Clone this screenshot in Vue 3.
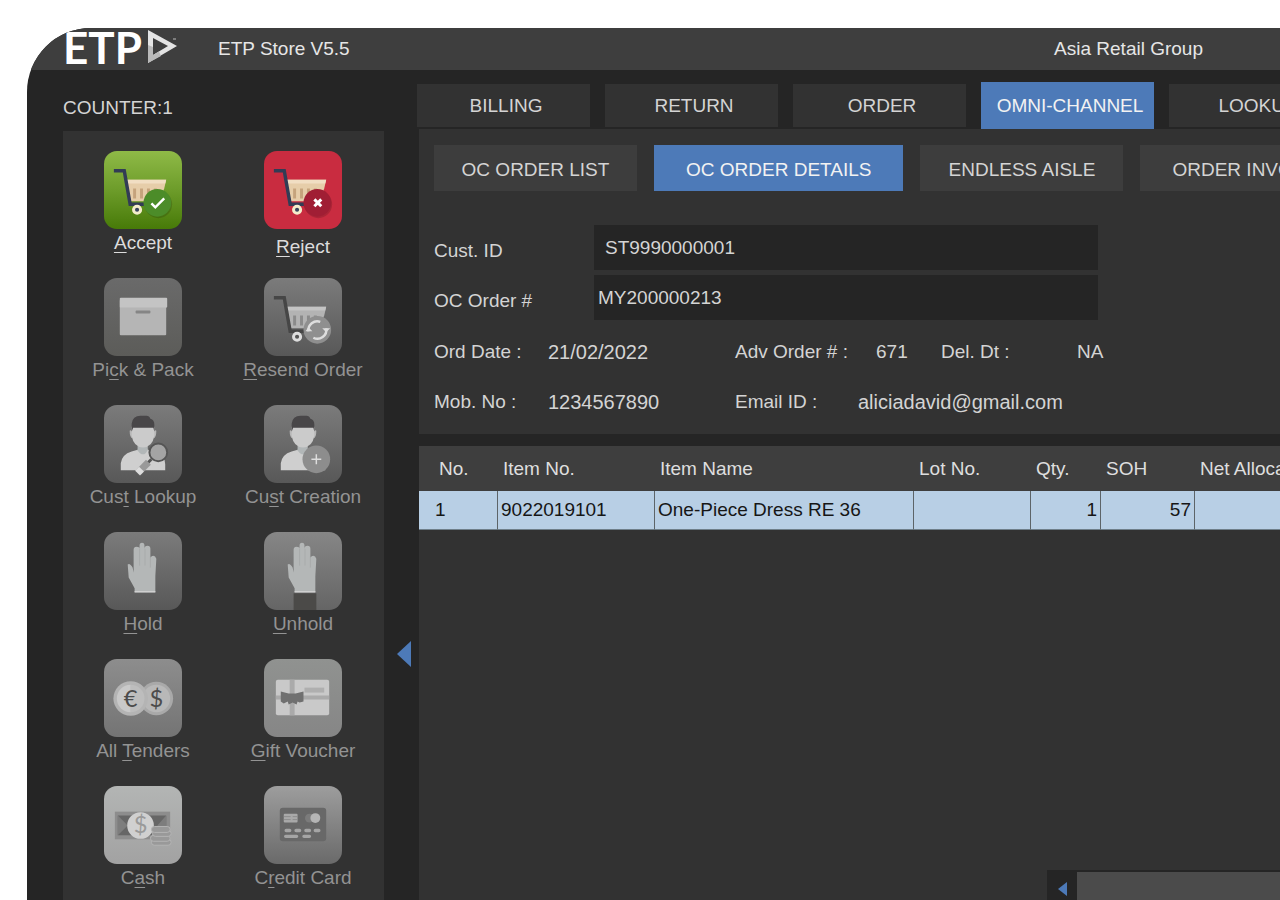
<template>
  <div class="shell">
    <header class="topbar">
      <div class="logo">
        <span class="logo-text">ETP</span>
        <svg class="logo-mark" width="30" height="34" viewBox="0 0 30 34">
          <path d="M0 0L29 16L0 33Z M5 8V25L20 16Z" fill="#e4e4e4" fill-rule="evenodd" />
          <path d="M0 15L5 17V25L11 21.500L13 26L0 33Z" fill="#b9b9b9" />
          <path d="M25 9h3" stroke="#bbb" />
        </svg>
      </div>
      <span class="app-name">ETP Store V5.5</span>
      <span class="company">Asia Retail Group</span>
    </header>

    <div class="workspace">
      <aside class="sidebar">
        <div class="counter">COUNTER:1</div>
        <div class="actions">
          <button
            v-for="action in actions"
            :key="action.id"
            type="button"
            class="action"
            :class="['action-' + action.id, { disabled: !action.enabled }]"
            :disabled="!action.enabled"
          >
            <svg class="tile" viewBox="0 0 79 79" aria-hidden="true">
              <!-- Cart icons -->
              <g v-if="action.icon === 'cart'">
                <path class="cart-basket" d="M23 29H63L61 38L56 51H27Z" />
                <path class="cart-rim" d="M23 29H63L62 33H24Z" />
                <path class="cart-slots" d="M31 38V48M38 38V48M45 38V48M52 38V48" />
                <path class="cart-handle" d="M10 20H20.500L26.500 54H44" />
                <circle class="cart-wheel" cx="33.500" cy="59.500" r="3.600" />
                <circle class="badge-shadow" cx="55" cy="54" r="14" />
                <circle class="badge" cx="54" cy="52.500" r="14" />
                <path v-if="action.id === 'accept'" class="badge-mark" d="M48 53L52 57L61 48" />
                <path v-if="action.id === 'reject'" class="badge-mark thick" d="M51 49L58 56M58 49L51 56" />
                <g v-if="action.id === 'resend'">
                  <path class="badge-mark" d="M45 54A9 9 0 0 1 57 44.500M63 51A9 9 0 0 1 50 60.500" />
                  <path d="M42 54L45 50L49 54ZM59 51L63 55L67 51Z" fill="#ddd" />
                </g>
              </g>

              <!-- Box -->
              <g v-if="action.icon === 'box'">
                <rect x="16" y="22" width="47" height="36" rx="1" fill="#b5b5b5" />
                <rect x="16" y="20" width="48" height="10" rx="1" fill="#c4c4c4" />
                <rect x="32" y="33" width="15" height="3" rx="1" fill="#858585" />
              </g>

              <!-- Customers -->
              <g v-if="action.icon === 'person'">
                <path d="M17 66V59Q18 50 28 47L35 45V40H44V45L53 48Q62 51 62 60V66Z" fill="#cfcfcf" />
                <path d="M34 40H44V46Q40 54 34 46Z" fill="#b2b7b8" />
                <path d="M26 26Q27 25 29 27V34Q26 33 26 26ZM53 26Q52 25 50 27V34Q53 33 53 26Z" fill="#b8b8b8" />
                <path d="M28 22H51V31Q49 43 39.500 43Q30 43 28 31Z" fill="#cbcbcb" />
                <path d="M28 27V19Q29 11 37 11H43Q46 11 47 14Q51 15 51 20V27L50 23H29.500Z" fill="#484648" />
                <g v-if="action.id === 'lookup'">
                  <path d="M48 55L44 59" stroke="#555" stroke-width="3" />
                  <path d="M45 58L35 68" stroke="#999" stroke-width="7" />
                  <path d="M38 65L34 69" stroke="#ddd" stroke-width="7" />
                  <circle cx="55" cy="48" r="9" fill="#a4a4a4" stroke="#555" stroke-width="2" />
                </g>
                <g v-else>
                  <circle cx="53" cy="55" r="14" fill="#8d8d8d" />
                  <path d="M53 50V60M48 55H58" stroke="#ddd" stroke-width="1.500" />
                </g>
              </g>

              <!-- Hands -->
              <g v-if="action.icon === 'hand'">
                <path v-if="action.id === 'unhold'" d="M30 62H53V79H30Z" fill="#4b4a48" />
                <path
                  d="M30 18Q30 15 33 15T36 17V14Q36 11 38.500 11T41 14V17Q41 14 44 14T47 17V26Q48 24 50 24T53 27L52 45V61H31V57L25 46L24 33Q26 31 29 36L30 41Z"
                  fill="#b4b7b7"
                />
                <path d="M36 17V34M41.500 17V34M47 25V36" stroke="#a3a6a6" stroke-width=".7" />
                <path d="M31 60.500H52" stroke="#d0d0d0" stroke-width="1.500" />
              </g>

              <!-- Tenders -->
              <g v-if="action.icon === 'coins'">
                <circle cx="53" cy="40" r="17" fill="#a9a9a9" />
                <circle cx="53" cy="40" r="14" fill="#b8b8b8" />
                <circle cx="27" cy="40" r="17.500" fill="#b4b4b4" />
                <path d="M27 26A14 14 0 0 0 27 54Z" fill="#c9c9c9" />
                <path d="M27 26A14 14 0 0 1 27 54Z" fill="#bdbdbd" />
                <text class="coin-sign" x="27" y="49">€</text>
                <text class="coin-sign" x="53" y="49">$</text>
              </g>

              <!-- Gift voucher -->
              <g v-if="action.icon === 'gift'">
                <rect x="12" y="21" width="54" height="36" rx="2" fill="#c9c9c9" />
                <path d="M26 21H31V57H26ZM12 37H66V41H12Z" fill="#aaa" />
                <path d="M17 33L25 35H32L40 33V43L36 44L34 43L33 46L29 44L25 46L24 43L20 45L17 43Z" fill="#707070" />
                <rect x="41" y="29" width="20" height="5" fill="#afafaf" />
              </g>

              <!-- Cash -->
              <g v-if="action.icon === 'cash'">
                <rect x="11" y="26" width="56" height="28" fill="#8d8d8d" />
                <path d="M14 30H63V50H14Z" fill="#666" />
                <path d="M14 30L24 40L14 50ZM63 30L54 40L63 50Z" fill="#7d7d7d" />
                <circle cx="37" cy="40" r="13.500" fill="#d0d0d0" />
                <text class="cash-sign" x="37" y="48">$</text>
                <g fill="#999" stroke="#b4b4b4">
                  <rect x="48" y="54" width="20" height="6" rx="3" />
                  <rect x="47" y="50" width="20" height="6" rx="3" />
                  <rect x="49" y="45" width="19" height="6" rx="3" />
                  <rect x="48" y="41" width="19" height="6" rx="3" />
                </g>
              </g>

              <!-- Credit card -->
              <g v-if="action.icon === 'card'">
                <rect x="16" y="22" width="47" height="34" rx="3" fill="#686868" />
                <rect x="20" y="28" width="14" height="9" rx="1" fill="#a9a9a9" />
                <path d="M20 31H27M20 34H27M29 31H34M29 34H34" stroke="#888" stroke-width=".8" />
                <circle cx="46" cy="32.500" r="4.500" fill="#7b7b7b" />
                <circle cx="52" cy="32.500" r="5" fill="#b5b5b5" />
                <path
                  d="M22.500 45H26M32.500 45H36M42.500 45H46M52 45H55.500M22 51H33M40.500 51H46"
                  stroke="#a5a5a5"
                  stroke-width="3.500"
                  stroke-linecap="round"
                />
              </g>
            </svg>
            <span class="action-label">{{ action.before }}<u>{{ action.key }}</u>{{ action.after }}</span>
          </button>
        </div>
      </aside>

      <div class="collapse">
        <button type="button" class="collapse-button" aria-label="Collapse">
          <svg width="14" height="26" viewBox="0 0 14 26"><path d="M14 0V26L0 13Z" fill="#4d7ab8" /></svg>
        </button>
      </div>

      <main class="content">
        <nav class="tabs">
          <button
            v-for="tab in tabs"
            :key="tab"
            type="button"
            class="tab"
            :class="{ active: tab === activeTab }"
            @click="activeTab = tab"
          >
            {{ tab }}
          </button>
        </nav>

        <section class="order-panel">
          <nav class="subtabs">
            <button
              v-for="tab in subTabs"
              :key="tab.label"
              type="button"
              class="subtab"
              :class="{ wide: tab.wide, active: tab.label === activeSubTab }"
              @click="activeSubTab = tab.label"
            >
              {{ tab.label }}
            </button>
          </nav>

          <form class="fields" @submit.prevent>
            <label for="cust-id">Cust. ID</label>
            <input id="cust-id" v-model="order.custId" class="indent" type="text" />
            <label for="oc-order">OC Order #</label>
            <input id="oc-order" v-model="order.orderNo" type="text" />
          </form>

          <div class="details">
            <span>Ord Date :</span>
            <span class="value">21/02/2022</span>
            <span>Adv Order # :</span>
            <span class="advance">671</span>
            <span>Del. Dt :</span>
            <span>NA</span>
            <span>Mob. No :</span>
            <span class="value">1234567890</span>
            <span>Email ID :</span>
            <span class="value email">aliciadavid@gmail.com</span>
          </div>
        </section>

        <section class="items-panel">
          <table class="items">
            <colgroup>
              <col class="col-no" />
              <col class="col-item" />
              <col class="col-name" />
              <col class="col-lot" />
              <col class="col-qty" />
              <col class="col-soh" />
              <col class="col-net" />
            </colgroup>
            <thead>
              <tr>
                <th v-for="column in columns" :key="column">{{ column }}</th>
              </tr>
            </thead>
            <tbody>
              <tr v-for="item in items" :key="item.no">
                <td>{{ item.no }}</td>
                <td>{{ item.itemNo }}</td>
                <td>{{ item.name }}</td>
                <td>{{ item.lot }}</td>
                <td class="number">{{ item.qty }}</td>
                <td class="number">{{ item.soh }}</td>
                <td></td>
              </tr>
            </tbody>
          </table>

          <div class="scrollbar">
            <button type="button" class="scroll-left" aria-label="Scroll left">
              <svg width="9" height="14" viewBox="0 0 9 14"><path d="M9 0V14L0 7Z" fill="#4d7ab8" /></svg>
            </button>
            <div class="scroll-thumb"></div>
          </div>
        </section>
      </main>
    </div>
  </div>
</template>

<script setup>
import { ref } from 'vue';

const activeTab = ref('OMNI-CHANNEL');
const activeSubTab = ref('OC ORDER DETAILS');

const tabs = ['BILLING', 'RETURN', 'ORDER', 'OMNI-CHANNEL', 'LOOKUP'];
const subTabs = [
  { label: 'OC ORDER LIST' },
  { label: 'OC ORDER DETAILS', wide: true },
  { label: 'ENDLESS AISLE' },
  { label: 'ORDER INVOICE', wide: true }
];

const order = ref({
  custId: 'ST9990000001',
  orderNo: 'MY200000213'
});

// key is the underlined shortcut letter of each label
const actions = [
  { id: 'accept', icon: 'cart', before: '', key: 'A', after: 'ccept', enabled: true },
  { id: 'reject', icon: 'cart', before: '', key: 'R', after: 'eject', enabled: true },
  { id: 'pick', icon: 'box', before: 'Pi', key: 'c', after: 'k & Pack' },
  { id: 'resend', icon: 'cart', before: '', key: 'R', after: 'esend Order' },
  { id: 'lookup', icon: 'person', before: 'Cus', key: 't', after: ' Lookup' },
  { id: 'creation', icon: 'person', before: 'Cu', key: 's', after: 't Creation' },
  { id: 'hold', icon: 'hand', before: '', key: 'H', after: 'old' },
  { id: 'unhold', icon: 'hand', before: '', key: 'U', after: 'nhold' },
  { id: 'tenders', icon: 'coins', before: 'All ', key: 'T', after: 'enders' },
  { id: 'gift', icon: 'gift', before: '', key: 'G', after: 'ift Voucher' },
  { id: 'cash', icon: 'cash', before: 'C', key: 'a', after: 'sh' },
  { id: 'card', icon: 'card', before: 'C', key: 'r', after: 'edit Card' }
];

const columns = ['No.', 'Item No.', 'Item Name', 'Lot No.', 'Qty.', 'SOH', 'Net Allocated'];

const items = ref([
  { no: 1, itemNo: '9022019101', name: 'One-Piece Dress RE 36', lot: '', qty: 1, soh: 57 }
]);
</script>

<style>
body {
  background: #fff;
}
</style>

<style scoped>
.shell {
  box-sizing: border-box;
  display: flex;
  flex-direction: column;
  height: calc(100vh - 28px);
  margin: 28px 0 0 27px;
  overflow: hidden;
  border-top-left-radius: 64px;
  background: #252525;
  color: #d4d4d4;
  font-family: "Liberation Sans", Arial, sans-serif;
  font-size: 19px;
  line-height: 22px;
}

button,
input {
  border: 0;
  padding: 0;
  background: none;
  color: inherit;
  font: inherit;
}

.topbar {
  display: flex;
  flex: none;
  align-items: center;
  height: 42px;
  padding: 0 77px 0 36px;
  background: #3e3e3e;
  color: #e6e6e6;
}

.logo {
  display: flex;
  align-items: center;
  align-self: flex-start;
  gap: 6px;
  width: 155px;
  height: 38px;
}

.logo-text {
  color: #fff;
  font-family: Lato, sans-serif;
  font-size: 44px;
  font-weight: 700;
  line-height: 38px;
}

.company {
  margin-left: auto;
}

.workspace {
  display: flex;
  flex: 1;
  min-height: 0;
}

.sidebar {
  flex: none;
  width: 321px;
  margin-left: 36px;
}

.counter {
  height: 61px;
  padding-top: 16px;
  box-sizing: border-box;
  line-height: 44px;
}

.actions {
  display: grid;
  grid-template-columns: 160px 160px;
  grid-auto-rows: 104px;
  row-gap: 23px;
  padding: 20px 0;
  background: #323232;
}

.action {
  display: flex;
  flex-direction: column;
  align-items: center;
  gap: 3px;
  color: #dcdcdc;
}

.action.disabled {
  color: #939393;
}

.action-reject {
  gap: 7px;
}

.action-label {
  white-space: nowrap;
}

.action-label u {
  text-decoration-thickness: 1px;
  text-underline-offset: 3px;
}

.tile {
  flex: none;
  width: 78px;
  height: 78px;
  border-radius: 13px;
  background: linear-gradient(#7b7b7b, #585858);
}

.action-accept .tile {
  background: linear-gradient(#8fba47, #6d9c2a 50%, #477a08);
}

.action-reject .tile {
  background: #c92c40;
}

.action-pick .tile {
  background: linear-gradient(#6a6a6a, #5c5c59);
}

.action-unhold .tile {
  background: linear-gradient(#868686, #656565);
}

.action-tenders .tile {
  background: linear-gradient(#8d8d8d, #747474);
}

.action-gift .tile {
  background: linear-gradient(#909290, #868686);
}

.action-cash .tile {
  background: linear-gradient(#b3b5b4, #a2a2a2);
}

.action-card .tile {
  background: linear-gradient(#9d9d9d, #6a6a6a);
}

.cart-basket {
  fill: #e6cda9;
}

.cart-rim {
  fill: #f1dec3;
}

.cart-slots {
  fill: none;
  stroke: #c5a37c;
  stroke-width: 3;
}

.cart-handle {
  fill: none;
  stroke: #323c55;
  stroke-width: 3.5;
}

.cart-wheel {
  fill: #39455d;
  stroke: #f4edcb;
  stroke-width: 3;
}

.badge {
  fill: #4c8c29;
}

.badge-shadow {
  fill: #000;
  opacity: 0.15;
}

.badge-mark {
  fill: none;
  stroke: #fff;
  stroke-width: 2.5;
}

.badge-mark.thick {
  stroke-width: 3;
}

.action-reject .badge {
  fill: #a01e34;
}

.action-resend .cart-basket {
  fill: #b3b3b3;
}

.action-resend .cart-rim {
  fill: #c4c4c4;
}

.action-resend .cart-slots {
  stroke: #8b8b8b;
}

.action-resend .cart-handle {
  stroke: #464646;
}

.action-resend .cart-wheel {
  fill: #555;
  stroke: #ddd;
}

.action-resend .badge {
  fill: #8f8f8f;
}

.action-resend .badge-shadow {
  opacity: 0;
}

.action-resend .badge-mark {
  stroke: #ddd;
}

.coin-sign {
  fill: #4c4c4c;
  font-family: Lato, sans-serif;
  font-size: 24px;
  text-anchor: middle;
}

.cash-sign {
  fill: #9a9a9a;
  font-family: Lato, sans-serif;
  font-size: 24px;
  text-anchor: middle;
}

.collapse {
  display: grid;
  flex: none;
  grid-template-rows: 71fr auto 29fr;
  width: 33px;
}

.collapse-button {
  display: flex;
  grid-row: 2;
  margin-left: 13px;
}

.content {
  display: flex;
  flex: 1;
  flex-direction: column;
  min-width: 0;
  overflow: hidden;
}

.tabs {
  display: flex;
  flex: none;
  gap: 15px;
  height: 59px;
  padding-top: 12px;
  box-sizing: border-box;
}

.tab {
  flex: none;
  box-sizing: border-box;
  width: 173px;
  height: 43px;
  margin-top: 2px;
  padding-left: 5px;
  background: #323232;
  white-space: nowrap;
}

.tab.active {
  height: 47px;
  margin-top: 0;
  background: #4d7ab8;
  color: #f2f2f2;
}

.order-panel {
  flex: none;
  height: 305px;
  margin-left: 2px;
  padding: 16px 0 0 15px;
  box-sizing: border-box;
  background: #323232;
}

.subtabs {
  display: flex;
  gap: 17px;
}

.subtab {
  flex: none;
  box-sizing: border-box;
  height: 46px;
  min-width: 203px;
  padding: 3px 26px 0;
  background: #3d3d3d;
  white-space: nowrap;
}

.subtab.wide {
  padding: 3px 32px 0;
}

.subtab.active {
  background: #4d7ab8;
  color: #f2f2f2;
}

.fields {
  display: grid;
  grid-template-columns: 160px 504px;
  grid-auto-rows: 45px;
  align-items: center;
  row-gap: 5px;
  margin-top: 34px;
}

.fields label {
  padding-top: 6px;
}

.fields input {
  box-sizing: border-box;
  width: 100%;
  height: 45px;
  padding-left: 4px;
  background: #252525;
}

.fields input.indent {
  padding-left: 11px;
}

.details {
  display: grid;
  grid-template-columns: 114px 187px 123px 83px 136px auto;
  grid-auto-rows: 50px;
  align-items: center;
  margin-top: 7px;
  white-space: nowrap;
}

.details .value {
  font-size: 20px;
}

.details .advance {
  padding-left: 18px;
}

.details .email {
  grid-column: 4 / span 3;
}

.items-panel {
  display: flex;
  flex: 1;
  flex-direction: column;
  min-height: 0;
  margin: 12px 0 0 2px;
  background: #323232;
}

.items {
  width: 976px;
  table-layout: fixed;
  border-collapse: separate;
  border-spacing: 0;
  white-space: nowrap;
}

.col-no {
  width: 79px;
}

.col-item {
  width: 157px;
}

.col-name {
  width: 259px;
}

.col-lot {
  width: 117px;
}

.col-qty {
  width: 70px;
}

.col-soh {
  width: 94px;
}

.items th {
  height: 45px;
  padding: 0 0 0 5px;
  background: #3e3e3e;
  color: #dedede;
  font-weight: 400;
  text-align: left;
}

.items th:first-child {
  padding-left: 20px;
}

.items td {
  height: 38px;
  padding: 0 3px;
  border-right: 1px solid #5d6468;
  border-bottom: 1px solid #6f7f8a;
  background: #b8cfe5;
  color: #161616;
}

.items td:first-child {
  padding-left: 16px;
}

.items .number {
  text-align: right;
}

.scrollbar {
  display: flex;
  flex: none;
  align-self: flex-end;
  width: 233px;
  height: 30px;
  margin-top: auto;
  background: #252525;
}

.scroll-left {
  display: flex;
  align-items: center;
  justify-content: center;
  width: 30px;
  padding-top: 8px;
}

.scroll-thumb {
  flex: 1;
  margin-top: 2px;
  background: #4b4b4b;
}
</style>
